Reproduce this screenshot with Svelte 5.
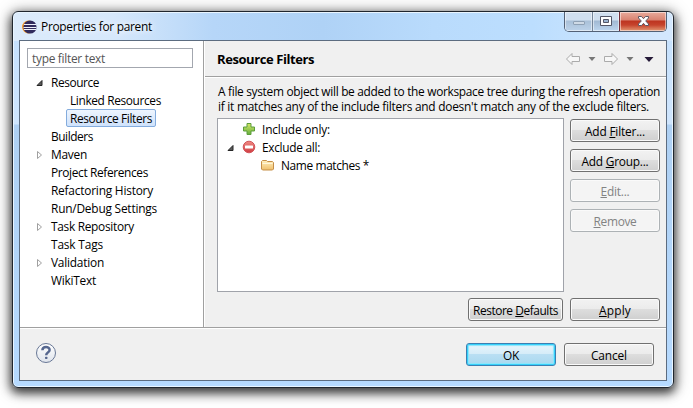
<script>
  // Text runs carry their nominal width so the layout keeps its metrics in any UI font.
  function fit(node, width) {
    const natural = node.getBoundingClientRect().width;
    const count = node.textContent.length;
    node.style.letterSpacing = `${(width - natural) / count}px`;
  }
  const tree = [
    { label: 'Resource', w: 48, arrow: 'open' },
    { label: 'Linked Resources', w: 91, child: true },
    { label: 'Resource Filters', w: 82, child: true, selected: true },
    { label: 'Builders', w: 42 },
    { label: 'Maven', w: 36, arrow: 'closed' },
    { label: 'Project References', w: 97 },
    { label: 'Refactoring History', w: 102 },
    { label: 'Run/Debug Settings', w: 106 },
    { label: 'Task Repository', w: 83, arrow: 'closed' },
    { label: 'Task Tags', w: 52 },
    { label: 'Validation', w: 53, arrow: 'closed' },
    { label: 'WikiText', w: 45 }
  ];
  const actions = [
    { pre: 'Add ', key: 'F', post: 'ilter...', w: 60 },
    { pre: 'Add ', key: 'G', post: 'roup...', w: 67 },
    { pre: '', key: 'E', post: 'dit...', w: 29, disabled: true },
    { pre: '', key: 'R', post: 'emove', w: 43, disabled: true }
  ];
</script>

{#snippet expander(kind)}
  <svg class="expander" width="8" height="10" viewBox="0 0 8 10">
    {#if kind === 'open'}
      <path d="M6 2.5V7.5H1Z" fill="#595959" stroke="#262626" />
    {:else if kind === 'closed'}
      <path d="M1.500 1.500V8.500L5.500 5Z" fill="#fff" stroke="#a0a0a0" />
    {/if}
  </svg>
{/snippet}

<div class="page">
  <div class="window">
    <header class="titlebar">
      <svg class="logo" width="15" height="14" viewBox="0 0 15 14">
        <ellipse cx="6.5" cy="7" rx="6.5" ry="6.5" fill="#f39a2e" />
        <circle cx="8" cy="7" r="6.6" fill="#302a5c" />
        <path d="M2 4.500H14M1.500 7.500H14.500M2 9.500H14" stroke="#eef0fa" stroke-width="1" />
      </svg>
      <span class="caption"><span use:fit={111}>Properties for parent</span></span>
      <div class="controls">
        <span class="ctl min"><svg width="27" height="19" viewBox="0 0 27 19"><rect x="8.500" y="9.500" width="11" height="3" rx=".5" fill="#cfdae6" stroke="#8fa1b5" /></svg></span>
        <span class="ctl max"><svg width="26" height="19" viewBox="0 0 26 19"><path d="M7.500 4.500H18.500V13.500H7.500Z" fill="#fff" stroke="#535666" /><path d="M10.500 7.500H15.500V10.500H10.500Z" fill="#9bb3d0" stroke="#535666" /></svg></span>
        <span class="ctl close"><svg width="46" height="19" viewBox="0 0 46 19"><path d="M18.500 4.500H21.500L23.500 6.700L25.500 4.500H28.500V6L25.700 9L28.500 12V13.500H25.500L23.500 11.300L21.500 13.500H18.500V12L21.300 9L18.500 6Z" fill="#fff" stroke="#5c5763" /></svg></span>
      </div>
    </header>

    <main class="client">
      <div class="upper">
        <aside>
          <div class="search"><span use:fit={73}>type filter text</span></div>
          <ul>
            {#each tree as item}
              <li class:child={item.child}>
                {@render expander(item.arrow)}
                <span class="label" class:selected={item.selected}><span use:fit={item.w}>{item.label}</span></span>
              </li>
            {/each}
          </ul>
        </aside>

        <section>
          <div class="heading">
            <strong><span use:fit={97}>Resource Filters</span></strong>
            <svg width="90" height="14" viewBox="0 0 90 14">
              <path d="M1.500 7L7 1.500V4.500H14.500V9.500H7V12.500Z" fill="#f7f7f7" stroke="#ababab" stroke-linejoin="round" />
              <path d="M23.500 5H30.500L27 9Z" fill="#777" />
              <path d="M52.500 7L47 1.500V4.500H39.500V9.500H47V12.500Z" fill="#f7f7f7" stroke="#ababab" stroke-linejoin="round" />
              <path d="M61.500 5H68.500L65 9Z" fill="#777" />
              <path d="M79.500 5H88.500L84 10Z" fill="#251a38" />
            </svg>
          </div>
          <div class="body">
            <p>
              <span use:fit={442}>A file system object will be added to the workspace tree during the refresh operation</span>
              <span use:fit={431}>if it matches any of the include filters and doesn't match any of the exclude filters.</span>
            </p>
            <div class="work">
              <div class="filters">
                <div class="row">
                  {@render expander('')}
                  <svg class="icon" width="14" height="14" viewBox="0 0 14 14">
                    <defs><linearGradient id="plus" x2="0" y2="1"><stop stop-color="#d9e86a" /><stop offset="1" stop-color="#63ae3c" /></linearGradient></defs>
                    <path d="M5 1.500H9V5H12.500V9H9V12.500H5V9H1.500V5H5Z" fill="url(#plus)" stroke="#5c9e3c" />
                  </svg>
                  <span use:fit={68}>Include only:</span>
                </div>
                <div class="row">
                  {@render expander('open')}
                  <svg class="icon" width="14" height="14" viewBox="0 0 14 14">
                    <defs><linearGradient id="minus" x2="0" y2="1"><stop stop-color="#ef8b84" /><stop offset="1" stop-color="#cf3b40" /></linearGradient></defs>
                    <circle cx="7" cy="7" r="5.800" fill="url(#minus)" stroke="#d2555a" />
                    <rect x="3" y="5.500" width="8" height="3" rx=".5" fill="#fff" />
                  </svg>
                  <span use:fit={58}>Exclude all:</span>
                </div>
                <div class="row nested">
                  <svg class="icon" width="14" height="14" viewBox="0 0 14 14">
                    <defs><linearGradient id="folder" x2="0" y2="1"><stop stop-color="#fff0c0" /><stop offset="1" stop-color="#efbf6c" /></linearGradient></defs>
                    <path d="M.5 11V3.500L1.500 2.500H5.500L6.500 3.500H11.500L12.500 4.500V11L11.500 12H1.500Z" fill="url(#folder)" stroke="#c58f48" />
                    <path d="M1.500 5.500H11.500" stroke="#fff6da" />
                  </svg>
                  <span use:fit={88}>Name matches *</span>
                </div>
              </div>
              <div class="actions">
                {#each actions as a}
                  <button disabled={a.disabled}><span use:fit={a.w}>{a.pre}<u>{a.key}</u>{a.post}</span></button>
                {/each}
              </div>
            </div>
            <div class="page-buttons">
              <button class="wide"><span use:fit={85}>Restore <u>D</u>efaults</span></button>
              <button><span use:fit={32}><u>A</u>pply</span></button>
            </div>
          </div>
        </section>
      </div>

      <footer>
        <svg width="22" height="22" viewBox="0 0 22 22">
          <defs><linearGradient id="help" x2="0" y2="1"><stop stop-color="#fff" /><stop offset="1" stop-color="#dfe4ec" /></linearGradient></defs>
          <circle cx="11" cy="11" r="9.500" fill="url(#help)" stroke="#697896" />
          <path d="M7.400 8.300C7.500 4 14.600 4.200 14.600 7.900C14.600 10.400 11.200 10.400 11.200 13.300" fill="none" stroke="#56678f" stroke-width="2.500" />
          <rect x="10" y="14.800" width="2.500" height="2.300" rx=".8" fill="#56678f" />
        </svg>
        <div class="dialog-buttons">
          <button class="default"><span use:fit={16}>OK</span></button>
          <button><span use:fit={36}>Cancel</span></button>
        </div>
      </footer>
    </main>
  </div>
</div>

<style>
  :global(body) { background: #fff; }
  .page {
    box-sizing: border-box; width: 693px; height: 408px; padding: 11px 0 0 12px; overflow: hidden;
    background: #fff; color: #000; font: 11.9px/15px "Open Sans", "Noto Sans", sans-serif;
  }
  .page * { box-sizing: border-box; }
  span { white-space: nowrap; }
  svg { display: block; flex: none; }
  .window {
    width: 662px; height: 377px; padding: 0 6px 6px; border: 1px solid #20262e; border-radius: 6px;
    background:
      linear-gradient(90deg, #dcebfb 0, #d6e8fb 100px, #b6d6f8 200px, #afd2f6 310px, #b9dbfc 420px, #bcdefe 520px, #d3e7fd 645px) 0 0 / 100% 29px no-repeat,
      linear-gradient(#c3dffc 0, #c6e1fd 29px, #cfe5fd 112px, #aed0f3 113px, #b6daff 100%);
    box-shadow: inset 0 0 0 1px #e9f5ff, 0 4px 10px 1px rgba(0, 0, 0, .66), 0 2px 16px 1px rgba(0, 0, 0, .4);
  }
  .titlebar { display: flex; height: 28px; padding-left: 3px; }
  .logo { margin-top: 8px; }
  .caption { margin: 7px 0 0 4px; text-shadow: 0 0 6px #fff, 0 0 9px #fff; }
  .controls {
    display: flex; width: 103px; height: 20px; margin-left: auto; overflow: hidden;
    border: 1px solid #536176; border-top: 0; border-radius: 0 0 5px 5px;
  }
  .ctl { height: 19px; box-shadow: inset 0 0 0 1px rgba(255, 255, 255, .5); }
  .min { width: 28px; border-right: 1px solid #75869a; background: linear-gradient(#d0dfef 0 8px, #a9c0d8 9px, #bdd3ea); }
  .max { width: 27px; border-right: 1px solid #75303a; background: linear-gradient(#d0dfef 0 8px, #a1b9d3 9px, #bdd6ef); }
  .close { width: 46px; background: linear-gradient(#e9ab9c 0, #d98371 8px, #bd3420 9px, #c6432c 13px, #e29974); }
  .client {
    display: flex; flex-direction: column; width: 648px; height: 341px; border: 1px solid #5c6c80; background: #f0f0f0;
  }
  .upper { display: flex; height: 286px; }
  aside { width: 184px; padding: 7px 9px 0 7px; border-right: 1px solid #a0a0a0; background: #fff; }
  .search { width: 166px; height: 20px; padding: 1px 4px; border: 1px solid #a3a7af; color: #555; line-height: 17px; }
  ul { margin: 5px 0 0; padding: 0; list-style: none; }
  li { display: flex; align-items: center; height: 18px; padding-left: 9px; }
  .expander { margin: 2px 0 0; }
  .label { display: flex; height: 18px; margin-left: 3px; padding: 0 3px; border: 1px solid transparent; line-height: 16px; }
  .child .label { margin-left: 22px; }
  .label.selected { border-color: #84acdd; border-radius: 2px; background: linear-gradient(#eef5fe, #cfe2fb); }
  section { display: flex; flex: 1; flex-direction: column; border-left: 1px solid #fff; }
  .heading { display: flex; justify-content: space-between; align-items: center; height: 36px; padding: 0 11px 0 12px; border-bottom: 1px solid #a0a0a0; }
  .heading strong { font-size: 13px; padding-top: 2px; }
  .body { padding: 6px 6px 0 12px; border-top: 1px solid #fff; }
  p { display: flex; flex-direction: column; align-items: flex-start; height: 34px; margin: 0; padding-left: 1px; }
  .work { display: flex; gap: 6px; }
  .filters { width: 347px; height: 174px; border: 1px solid #a0a3aa; background: #fff; }
  .row { display: flex; align-items: center; height: 18px; padding-left: 9px; line-height: 17px; }
  .row .icon { margin: 0 6px 0 7px; }
  .row.nested { padding-left: 36px; }
  .row:first-child { height: 19px; padding-top: 1px; }
  .actions { display: flex; flex-direction: column; gap: 7px; padding-top: 1px; }
  button {
    display: flex; justify-content: center; width: 90px; height: 23px; padding: 3px 0 0; border: 1px solid #707070;
    border-radius: 3px; background: linear-gradient(#f2f2f2 0, #ebebeb 48%, #dddddd 50%, #cfcfcf); box-shadow: inset 0 0 0 1px #fafafa;
    color: #000; font: inherit; line-height: 16px;
  }
  button:disabled { border-color: #adb2b5; background: #f4f4f4; color: #838383; }
  button.wide { width: 95px; }
  button.default { border-color: #3c7fb1; background: linear-gradient(#e8f5fb 0, #d5ecf8 48%, #b9dff3 50%, #a9d8ef); box-shadow: inset 0 0 0 1px #35d0fa, inset 0 0 1px 2px #8be5fb; }
  u { text-underline-offset: 1px; text-decoration-thickness: 1px; }
  .page-buttons { display: flex; justify-content: flex-end; gap: 7px; margin-top: 6px; }
  footer {
    display: flex; justify-content: space-between; flex: 1; padding: 14px 12px 0 15px;
    border-top: 1px solid #a0a0a0; box-shadow: inset 0 1px #fff;
  }
  .dialog-buttons { display: flex; gap: 8px; padding-top: 1px; }
</style>
